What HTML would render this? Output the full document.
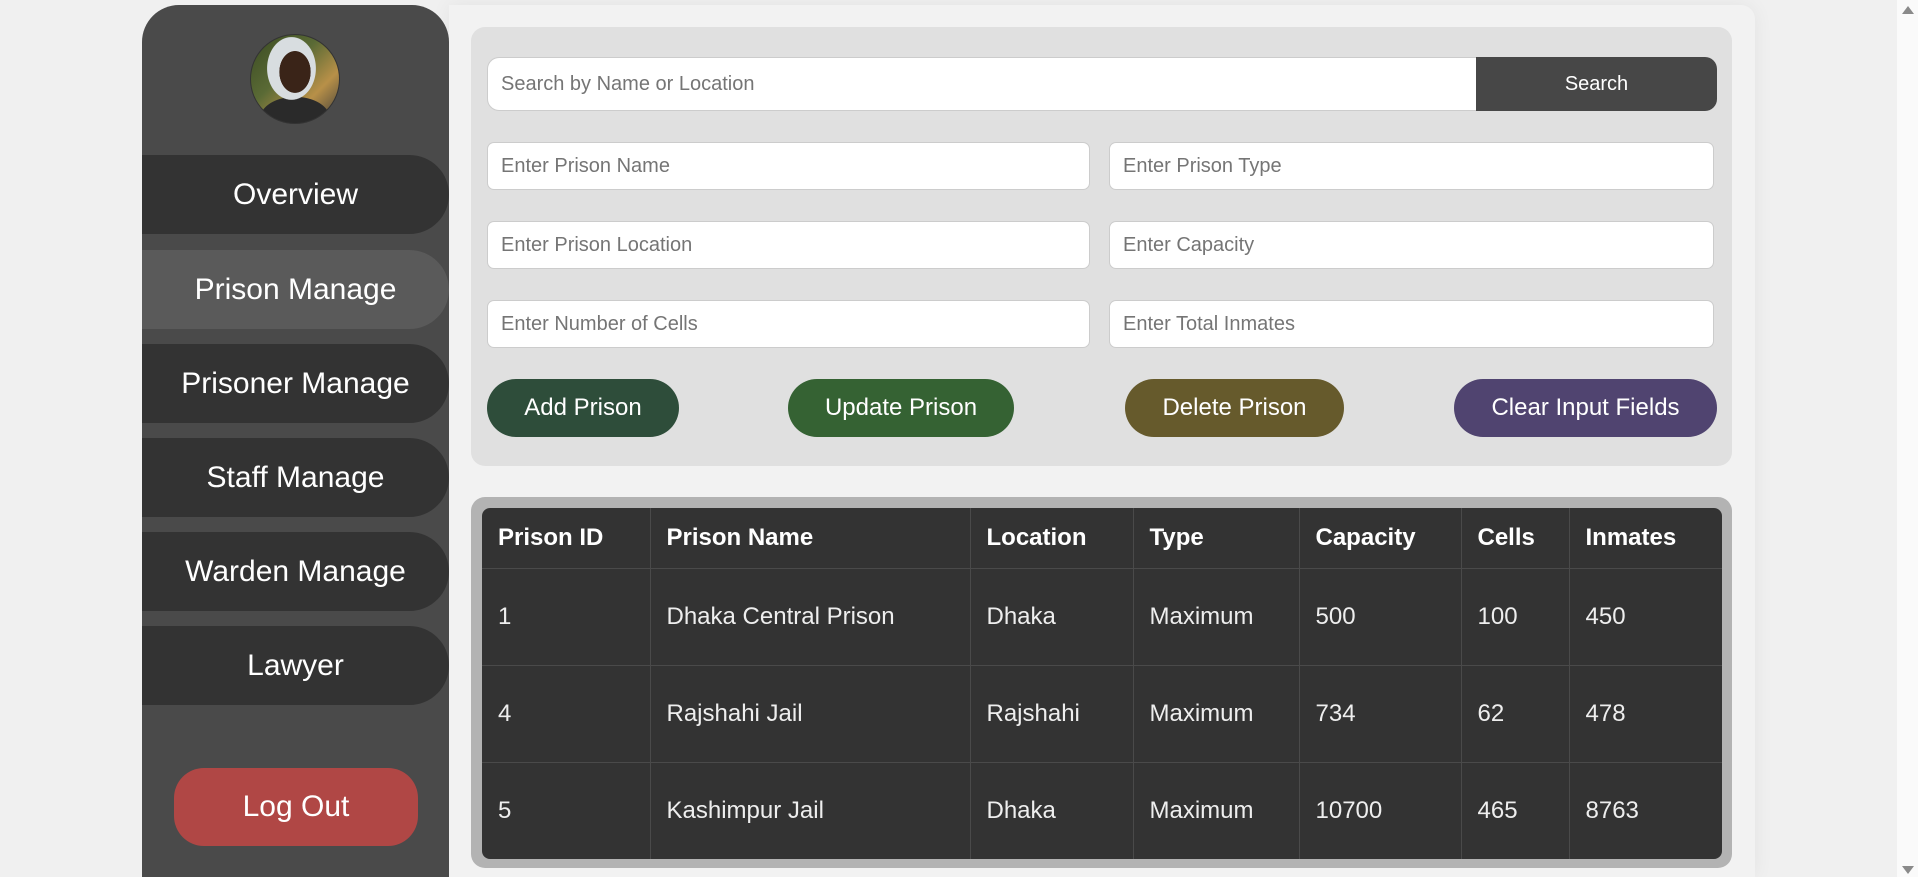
<!DOCTYPE html>
<html><head><meta charset="utf-8"><style>
*{box-sizing:border-box;margin:0;padding:0}
html,body{width:1918px;height:877px;overflow:hidden;background:#f0f0f0;font-family:"Liberation Sans",Arial,sans-serif}
.wrap{position:absolute;left:0;top:0;width:1918px;height:877px;overflow:hidden}
.sb{position:absolute;left:142px;top:5px;width:307px;height:872px;background:#4a4a4a;border-radius:37px 37px 0 0}
.av{position:absolute;left:250px;top:34px;width:90px;height:90px;border-radius:50%;background:radial-gradient(ellipse 18% 24% at 50% 42%,#3a2418 0 98%,transparent 100%),radial-gradient(ellipse 28% 36% at 46% 38%,#d8dde0 0 98%,transparent 100%),radial-gradient(ellipse 40% 25% at 50% 95%,#2a2a2a 0 98%,transparent 100%),linear-gradient(135deg,#3a4a22,#5a6a35 40%,#b89048 70%,#3a3a3a);border:1px solid #333}
.nav{position:absolute;left:142px;width:307px;height:79px;border-radius:0 40px 40px 0;background:#333;color:#fff;font-size:30px;text-align:center;line-height:79px}
.nav.a{background:#5a5a5a}
.lo{position:absolute;left:174px;top:768px;width:244px;height:78px;border-radius:30px;background:#b04745;color:#fff;font-size:30px;text-align:center;line-height:78px}
.main{position:absolute;left:449px;top:5px;width:1306px;height:872px;background:#f2f2f2;border-radius:0 14px 0 0;box-shadow:0 0 20px rgba(0,0,0,.06)}
.form{position:absolute;left:471px;top:27px;width:1261px;height:439px;background:#e0e0e0;border-radius:14px}
.in{position:absolute;background:#fff;border:1px solid #ccc;border-radius:7px;color:#757575;font-size:20px;padding-left:13px;display:flex;align-items:center}
.sbtn{position:absolute;left:1476px;top:57px;width:241px;height:54px;background:#474747;color:#fff;border-radius:0 12px 12px 0;font-size:20px;text-align:center;line-height:54px}
.btn{position:absolute;top:379px;height:58px;border-radius:29px;color:#fff;font-size:24px;text-align:center;line-height:58px}
.tp{position:absolute;left:471px;top:497px;width:1261px;height:371px;background:#b3b3b3;border-radius:14px}
table{position:absolute;left:482px;top:508px;width:1240px;height:351px;border-collapse:collapse;background:#333;color:#eee;font-size:24px;border-radius:8px;overflow:hidden}
td,th{border:1px solid #4a4a4a;text-align:left;padding-left:16px}
th{height:60px;font-weight:bold;color:#fff}
td{height:97px}
tr>*:first-child{border-left:none}tr>*:last-child{border-right:none}
tr:first-child>*{border-top:none}tr:last-child>*{border-bottom:none}
.scr{position:absolute;left:1897px;top:0;width:21px;height:877px;background:#fafafa}
.th{position:absolute;left:1902px;top:51px;width:12px;height:765px;background:#8a8a8a;border-radius:6px}
</style></head><body><div class="wrap">
<div class="main"></div>
<div class="sb"></div>
<div class="av"></div>
<div class="nav" style="top:155px">Overview</div>
<div class="nav a" style="top:250px">Prison Manage</div>
<div class="nav" style="top:344px">Prisoner Manage</div>
<div class="nav" style="top:438px">Staff Manage</div>
<div class="nav" style="top:532px">Warden Manage</div>
<div class="nav" style="top:626px">Lawyer</div>
<div class="lo">Log Out</div>
<div class="form"></div>
<div class="in" style="left:487px;top:57px;width:990px;height:54px;border-radius:12px 0 0 12px;border-right:none">Search by Name or Location</div>
<div class="sbtn">Search</div>
<div class="in" style="left:487px;top:142px;width:603px;height:48px">Enter Prison Name</div>
<div class="in" style="left:1109px;top:142px;width:605px;height:48px">Enter Prison Type</div>
<div class="in" style="left:487px;top:221px;width:603px;height:48px">Enter Prison Location</div>
<div class="in" style="left:1109px;top:221px;width:605px;height:48px">Enter Capacity</div>
<div class="in" style="left:487px;top:300px;width:603px;height:48px">Enter Number of Cells</div>
<div class="in" style="left:1109px;top:300px;width:605px;height:48px">Enter Total Inmates</div>
<div class="btn" style="left:487px;width:192px;background:#2e4d3a">Add Prison</div>
<div class="btn" style="left:788px;width:226px;background:#356233">Update Prison</div>
<div class="btn" style="left:1125px;width:219px;background:#665a2c">Delete Prison</div>
<div class="btn" style="left:1454px;width:263px;background:#504470">Clear Input Fields</div>
<div class="tp"></div>
<table>
<tr><th style="width:168px">Prison ID</th><th style="width:320px">Prison Name</th><th style="width:163px">Location</th><th style="width:166px">Type</th><th style="width:162px">Capacity</th><th style="width:108px">Cells</th><th>Inmates</th></tr>
<tr><td>1</td><td>Dhaka Central Prison</td><td>Dhaka</td><td>Maximum</td><td>500</td><td>100</td><td>450</td></tr>
<tr><td>4</td><td>Rajshahi Jail</td><td>Rajshahi</td><td>Maximum</td><td>734</td><td>62</td><td>478</td></tr>
<tr><td>5</td><td>Kashimpur Jail</td><td>Dhaka</td><td>Maximum</td><td>10700</td><td>465</td><td>8763</td></tr>
</table>
<div class="scr"><div class="th"></div>
<div style="position:absolute;left:5px;top:6px;width:0;height:0;border-left:6px solid transparent;border-right:6px solid transparent;border-bottom:8px solid #8a8a8a"></div>
<div style="position:absolute;left:5px;top:866px;width:0;height:0;border-left:6px solid transparent;border-right:6px solid transparent;border-top:8px solid #8a8a8a"></div></div>
</div></body></html>
